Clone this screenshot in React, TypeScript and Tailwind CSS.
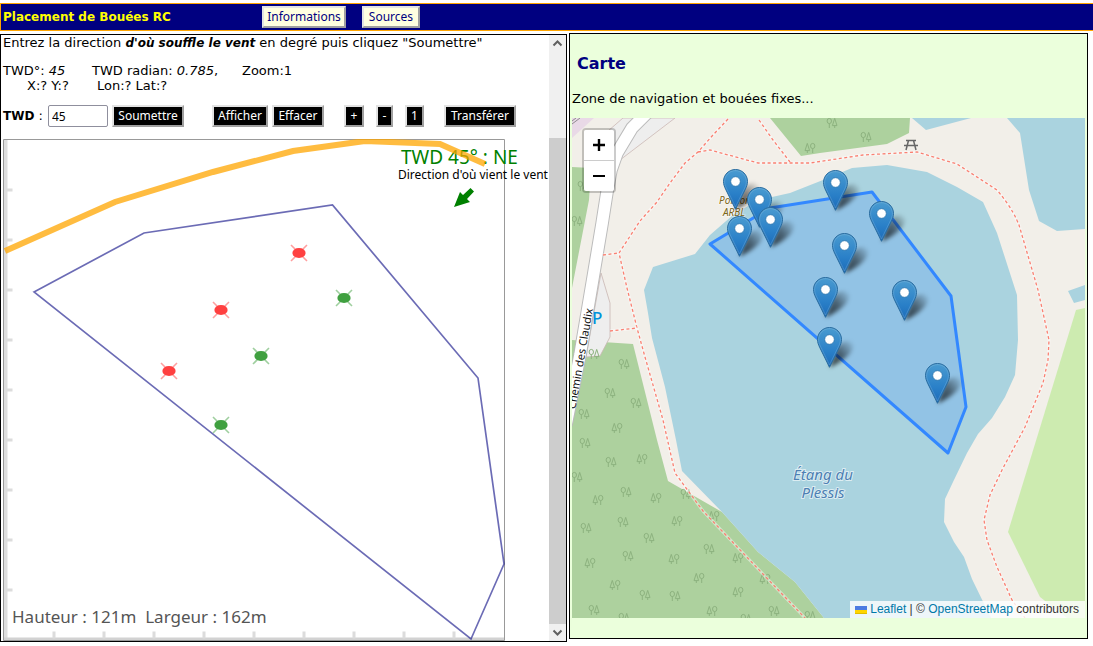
import React from "react";

type Point = [number, number];

const pins: Point[] = [
  [735, 169], [835, 170], [759, 187], [881, 201], [770, 207], [739, 216],
  [844, 233], [825, 277], [904, 280], [829, 327], [937, 363],
];

const treesRoundFirst: Point[] = [
  [583, 186], [577, 221], [594, 354], [624, 364], [610, 393], [636, 403], [584, 414],
  [585, 443], [611, 462], [577, 477], [626, 492], [686, 494], [623, 522], [586, 528],
  [649, 538], [709, 549], [628, 556], [645, 595], [675, 596], [594, 610], [774, 611],
  [810, 616], [624, 618], [746, 619], [832, 123], [866, 137],
];

const treesRoundLast: Point[] = [
  [617, 428], [642, 459], [598, 500], [656, 498], [714, 516], [677, 521], [674, 559],
  [590, 563], [738, 558], [699, 578], [615, 585], [765, 579], [738, 592], [712, 611],
  [810, 148],
];

const redBuoys: Point[] = [[299, 252], [221, 309], [169, 370]];
const greenBuoys: Point[] = [[344, 297], [261, 355], [221, 424]];
const verticalTicks = [189, 239, 289, 339, 389, 439, 489, 539, 589];
const horizontalTicks = [54, 104, 154, 204, 254, 304, 354, 404, 454];

const lake =
  "M644 290L653 267L695 254L710 235L733 215L753 203L772 197L790 193L823 180L852 168L887 165L927 172L957 187L983 202L997 233L1017 295L1018 340L1015 375L1005 397L992 418L978 434L967 453L953 482L945 499L944 522L954 542L964 557L972 579L991 618H824L795 582L758 552L722 512L682 471L676 440L665 387L652 338L648 313Z";

const road = "M648 112L632 128L617 153L611 170L607 192L602 224L594 272L580 355L566 425";

const paths = [
  "M728 119L713 135L698 152L685 163L670 183L657 202L640 221L619 253L627 288L637 328L645 357L663 420L675 473L703 511L762 573L805 618",
  "M603 255L619 253",
  "M610 331L637 328",
  "M698 152L710 150L758 163L810 163L863 155L917 152L957 164L997 190C1012 208 1016 218 1019 225L1038 290L1049 340L1048 360L1043 383L1025 427L1002 470L990 495L984 520L987 540L997 567L1012 600L1025 618",
  "M759 120L773 140L790 162",
];

function Tree({ at, flip }: { at: Point; flip?: boolean }) {
  return (
    <g transform={`translate(${at[0]} ${at[1]})${flip ? " scale(-1 1)" : ""}`} fill="none" stroke="#8db27f" strokeWidth="1">
      <ellipse cx="-2.7" cy="-2" rx="2.2" ry="2.6" />
      <path d="M-2.7 0.6V5M2.7 -4.6L0.4 2.6H5L2.7 -4.6M2.7 2.6V5" />
    </g>
  );
}

function Pin({ at }: { at: Point }) {
  return (
    <g transform={`translate(${at[0] - 12} ${at[1]})`}>
      <path d="M12.5 40.5L20 20C26 12 36 13 36 19C36 27 23 36 12.5 40.5Z" fill="url(#shade)" filter="url(#soft)" />
      <path
        d="M12.5 .5C5.8 .5 .5 5.9 .5 12.5C.5 15.3 1.4 17.7 2.6 20.2L12.5 40.3L22.4 20.2C23.6 17.7 24.5 15.3 24.5 12.5C24.5 5.9 19.2 .5 12.5 .5Z"
        fill="url(#pin)"
        stroke="#2a6c9f"
      />
      <path
        d="M12.5 1.6C6.4 1.6 1.6 6.5 1.6 12.5C1.6 15 2.5 17.4 3.6 19.7L12.5 37.8L21.4 19.7C22.5 17.4 23.4 15 23.4 12.5C23.4 6.5 18.6 1.6 12.5 1.6Z"
        fill="none"
        stroke="#fff"
        strokeOpacity=".14"
      />
      <circle cx="12.5" cy="12.5" r="4.8" fill="#fff" stroke="#2a73ac" strokeWidth="0.8" />
    </g>
  );
}

function Buoy({ at, color }: { at: Point; color: string }) {
  return (
    <g transform={`translate(${at[0]} ${at[1]})`}>
      <path d="M-8 -8L8 8M-8 8L8 -8" stroke={color} strokeOpacity=".5" strokeWidth="1.6" />
      <ellipse rx="6.6" ry="5" fill={color} />
    </g>
  );
}

function WindPlan() {
  return (
    <svg viewBox="3 138 546 502" className="block h-[502px] w-[546px] shrink-0" role="img" aria-label="Plan des bouées">
      <rect x="4" y="139" width="3.5" height="500" fill="#dedede" />
      <rect x="4" y="636.5" width="500" height="2.5" fill="#d2d2d2" />
      {verticalTicks.map((y) => (
        <rect key={y} x="6" y={y - 1.5} width="6.5" height="3" fill="#dcdcdc" />
      ))}
      {horizontalTicks.map((x) => (
        <rect key={x} x={x - 1.5} y="630.5" width="3" height="7" fill="#dcdcdc" />
      ))}
      <path d="M3.5 639.5V138.5H504.5V639.5Z" fill="none" stroke="#999" />
      <text x="401" y="163" fontSize="19" fill="green" className="font-['Noto_Sans',sans-serif]">TWD 45° : NE</text>
      <text x="398" y="178" fontSize="12" fill="#000" className="font-['Noto_Sans',sans-serif]">Direction d'où vient le vent</text>
      <path d="M454 206L460 191L463 194L470.500 187L474 190.500L467 198L470 201Z" fill="green" />
      <path d="M5 250L115 201L213 171L293 150L365 140L440 143L485 163" fill="none" stroke="#ffa500" strokeOpacity=".75" strokeWidth="6" />
      <path d="M34 291L144 232L332.500 204L478 377L504 563L471 638Z" fill="none" stroke="#000080" strokeOpacity=".58" strokeWidth="1.7" />
      {redBuoys.map((p) => <Buoy key={p.join()} at={p} color="#ff4040" />)}
      {greenBuoys.map((p) => <Buoy key={p.join()} at={p} color="#40a040" />)}
      <text x="12" y="622" fontSize="17" fill="#555" className="whitespace-pre font-['Noto_Sans',sans-serif]">{"Hauteur : 121m  Largeur : 162m"}</text>
    </svg>
  );
}

function LakeMap() {
  return (
    <svg viewBox="572 118 513 500" preserveAspectRatio="xMinYMin slice" className="block h-full w-full" role="img" aria-label="Carte de l'étang du Plessis">
      <defs>
        <linearGradient id="pin" x1="0" y1="0" x2="0" y2="1">
          <stop offset="0" stopColor="#4a9bd0" />
          <stop offset=".6" stopColor="#2a80c8" />
          <stop offset="1" stopColor="#1c6bb8" />
        </linearGradient>
        <linearGradient id="shade" x1="0" y1="1" x2="1" y2="0">
          <stop offset="0" stopColor="#000" stopOpacity=".75" />
          <stop offset=".5" stopColor="#000" stopOpacity=".5" />
          <stop offset="1" stopColor="#000" stopOpacity="0" />
        </linearGradient>
        <filter id="soft" x="-30%" y="-30%" width="160%" height="160%">
          <feGaussianBlur stdDeviation="2" />
        </filter>
      </defs>
      <path d="M572 118H1085V618H572Z" fill="#f2efe9" />
      <path d="M572 167L591 168L589 200L572 288ZM572 340L633 344L657 440L668 481L722 512L758 552L795 582L824 618H572ZM770 118L801 156L820 153L887 144L909 133L910 118Z" fill="#add19e" />
      <path d={lake} fill="#aad3df" />
      <path d="M912 118L926 130L971 118ZM1007 118L1020 133L1029 190L1039 221L1057 231L1085 229V118ZM1068 291L1085 285V300L1074 303Z" fill="#aad3df" />
      <path d="M1076 310L1085 308V618H1067L1040 597L1008 532Z" fill="#cdebb0" />
      <path d="M572 118H594L572 138Z" fill="#e9d9e7" />
      <path d="M572 124L580 118M572 121L576 118" stroke="#777" strokeWidth="0.8" />
      <path d="M623 118H675L620 160L608 150V131Z" fill="#eee" stroke="#cbb9b5" strokeWidth="0.8" />
      <path d="M601 273L610 303V337L600 356L586 357Z" fill="#eee" stroke="#c9b6b2" strokeWidth="0.8" />
      {treesRoundFirst.map((p) => <Tree key={p.join()} at={p} />)}
      {treesRoundLast.map((p) => <Tree key={p.join()} at={p} flip />)}
      <path d={road} fill="none" stroke="#bbb" strokeWidth="13.5" />
      <path d={road} fill="none" stroke="#fff" strokeWidth="11.5" />
      {paths.map((d) => (
        <g key={d} fill="none">
          <path d={d} stroke="#fff" strokeOpacity=".45" strokeWidth="3" />
          <path d={d} stroke="#fa8072" strokeWidth="1.3" strokeDasharray="3 2.500" />
        </g>
      ))}
      <path d="M906 140.500H916M904 145.500H918M908.500 140.500L906 150M913.500 140.500L916 150" fill="none" stroke="#666" strokeWidth="1.5" />
      <text x="592" y="324" fontSize="17" fontWeight="500" fill="#0092da" className="font-['Noto_Sans',sans-serif]">P</text>
      <text textAnchor="end" transform="translate(593 309) rotate(-80)" fontSize="11" fill="#111" className="font-['Noto_Sans',sans-serif]">Chemin des Claudix</text>
      <g textAnchor="middle" fontStyle="italic" className="font-['Noto_Sans',sans-serif]">
        <g fontSize="15" fill="#4d80b3" stroke="#fff" strokeOpacity=".6" strokeWidth="2" paintOrder="stroke">
          <text x="823" y="480">Étang du</text>
          <text x="823" y="498">Plessis</text>
        </g>
        <g fontSize="10" fill="#7d6618" stroke="#fff" strokeOpacity=".5" strokeWidth="1.5" paintOrder="stroke">
          <text x="735" y="204">Ponton</text>
          <text x="734" y="216">ARBL</text>
        </g>
      </g>
      <path d="M710 244L770 208L872 192L951 296L966 407L948 453Z" fill="#38f" fillOpacity=".2" stroke="#38f" strokeWidth="3" strokeLinejoin="round" />
      {pins.map((p) => <Pin key={p.join()} at={p} />)}
    </svg>
  );
}

function DarkButton({ children, className = "" }: { children: React.ReactNode; className?: string }) {
  return (
    <button type="button" className={`h-[22px] shrink-0 border-2 border-t-[#e3e3e3] border-l-[#e3e3e3] border-r-[#a0a0a0] border-b-[#a0a0a0] bg-black text-center font-['Noto_Sans',sans-serif] text-[12px] leading-[18px] text-white ${className}`}>
      {children}
    </button>
  );
}

function TabButton({ children, className = "" }: { children: React.ReactNode; className?: string }) {
  return (
    <button type="button" className={`h-[22px] border-2 border-t-[#e3e3e3] border-l-[#e3e3e3] border-r-[#a0a0a0] border-b-[#a0a0a0] bg-[#ffffe0] text-center font-['Noto_Sans',sans-serif] text-[12px] leading-[18px] text-[#000080] ${className}`}>
      {children}
    </button>
  );
}

export default function App() {
  return (
    <div className="bg-white pt-[3px] font-['DejaVu_Sans',sans-serif] text-[13px] leading-[15px] text-black">
      <header className="flex h-7 items-center border-y border-l border-[#ffa500] bg-[#000080] pl-0.5">
        <h1 className="w-[259px] text-[12px] font-bold text-[#ffff00]">Placement de Bouées RC</h1>
        <nav className="flex gap-4">
          <TabButton className="w-[84px]">Informations</TabButton>
          <TabButton className="w-[58px]">Sources</TabButton>
        </nav>
      </header>
      <main className="grid grid-cols-[567fr_519fr] items-start gap-x-0.5 pt-0.5 pr-[5px]">
        <section className="mt-px flex border border-black">
          <div className="min-w-0 flex-1 overflow-hidden pl-0.5">
            <p className="whitespace-nowrap">
              Entrez la direction <b className="text-[12px] italic">d'où souffle le vent</b> en degré puis cliquez "Soumettre"
            </p>
            <div className="mt-3 whitespace-nowrap">
              <p className="flex">
                <span className="w-[89px]">TWD°: <i>45</i></span>
                <span className="w-[150px]">TWD radian: <i>0.785</i>,</span>
                <span>Zoom:1</span>
              </p>
              <p className="flex pl-6">
                <span className="w-[70px]">X:? Y:?</span>
                <span>Lon:? Lat:?</span>
              </p>
            </div>
            <form className="mt-3 flex items-center" onSubmit={(e) => e.preventDefault()}>
              <label htmlFor="twd" className="w-[45px] whitespace-nowrap"><b className="text-[12px]">TWD</b> :</label>
              <input id="twd" defaultValue="45" className="h-[22px] w-[60px] rounded-xs border border-[#8f8f9d] bg-white px-[3px] font-['Noto_Sans',sans-serif] text-[12px]" />
              <DarkButton className="ml-1 w-[72px]">Soumettre</DarkButton>
              <DarkButton className="ml-7 w-14">Afficher</DarkButton>
              <DarkButton className="ml-1 w-[52px]">Effacer</DarkButton>
              <DarkButton className="ml-5 w-5">+</DarkButton>
              <DarkButton className="ml-3 w-[17px]">-</DarkButton>
              <DarkButton className="ml-3 w-[19px]">1</DarkButton>
              <DarkButton className="ml-5 w-[72px]">Transférer</DarkButton>
            </form>
            <div className="mt-3">
              <WindPlan />
            </div>
          </div>
          <div className="flex w-[17px] shrink-0 flex-col bg-[#f0f0f0]" aria-hidden="true">
            <svg viewBox="0 0 17 17" className="h-[17px] w-[17px]"><path d="M4.500 10.500L8.500 6.500L12.500 10.500" fill="none" stroke="#606060" strokeWidth="2" /></svg>
            <div className="mt-[86px] flex-1 bg-[#cdcdcd]" />
            <svg viewBox="0 0 17 17" className="h-[17px] w-[17px]"><path d="M4.500 6.500L8.500 10.500L12.500 6.500" fill="none" stroke="#606060" strokeWidth="2" /></svg>
          </div>
        </section>
        <section className="border border-black bg-[#ebffdc] px-0.5 pb-5">
          <h2 className="pt-5 pl-[5px] text-[16px] leading-5 font-bold text-[#000080]">Carte</h2>
          <p className="mt-[17px]">Zone de navigation et bouées fixes...</p>
          <div className="relative mt-3 h-[500px] overflow-hidden">
            <LakeMap />
            <div className="absolute top-2.5 left-2.5 flex flex-col rounded-sm border-2 border-black/20 bg-clip-padding text-black">
              <button type="button" aria-label="Zoom avant" className="flex h-[31px] w-[30px] items-center justify-center rounded-t-xs border-b border-[#ccc] bg-white">
                <svg viewBox="0 0 12 12" className="size-3"><path d="M6 0V12M0 6H12" stroke="currentColor" strokeWidth="2.4" /></svg>
              </button>
              <button type="button" aria-label="Zoom arrière" className="flex h-[30px] w-[30px] items-center justify-center rounded-b-xs bg-white">
                <svg viewBox="0 0 12 12" className="size-3"><path d="M0 6H12" stroke="currentColor" strokeWidth="2" /></svg>
              </button>
            </div>
            <div className="absolute right-0 bottom-0 flex items-center bg-white/80 pr-1.5 pl-[5px] font-['Liberation_Sans',sans-serif] text-[12px] leading-[17px] whitespace-pre text-[#333]">
              <a href="#leaflet" className="flex items-center gap-[3px] text-[#0078a8]">
                <svg viewBox="0 0 12 8" className="h-2 w-3"><path fill="#4c7be1" d="M0 0h12v4H0z" /><path fill="#ffd500" d="M0 4h12v3H0z" /><path fill="#e0bc00" d="M0 7h12v1H0z" /></svg>
                Leaflet
              </a>
              <span> | © </span>
              <a href="#openstreetmap" className="text-[#0078a8]">OpenStreetMap</a>
              <span> contributors</span>
            </div>
          </div>
        </section>
      </main>
    </div>
  );
}
